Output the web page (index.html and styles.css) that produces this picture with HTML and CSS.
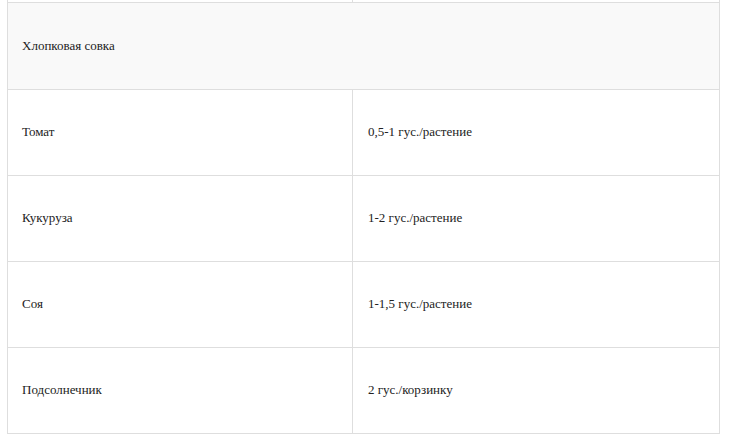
FILE: index.html
```html
<!DOCTYPE html>
<html lang="ru">
<head>
<meta charset="utf-8">
<title>Таблица</title>
<link rel="stylesheet" href="styles.css">
</head>
<body>
<div class="page">
  <table class="norms">
    <colgroup>
      <col class="col-a">
      <col class="col-b">
    </colgroup>
    <tbody>
      <tr class="stub-row"><td></td><td></td></tr>
      <tr class="group-row"><td colspan="2">Хлопковая совка</td></tr>
      <tr><td>Томат</td><td>0,5-1 гус./растение</td></tr>
      <tr><td>Кукуруза</td><td>1-2 гус./растение</td></tr>
      <tr><td>Соя</td><td>1-1,5 гус./растение</td></tr>
      <tr><td>Подсолнечник</td><td>2 гус./корзинку</td></tr>
    </tbody>
  </table>
</div>
</body>
</html>
```
FILE: styles.css
```css
html, body {
  margin: 0;
  padding: 0;
  background: #ffffff;
}
.page {
  padding: 0 0 0 7px;
  width: 712px;
  font-family: "Liberation Serif", "Times New Roman", serif;
  font-size: 13px;
  color: #222222;
}
.norms {
  border-collapse: collapse;
  width: 712px;
  table-layout: fixed;
}
.col-a { width: 345px; }
.col-b { width: 367px; }
.norms td {
  border: 1px solid #dedede;
  height: 86px;
  padding: 0 15px;
  vertical-align: middle;
  box-sizing: border-box;
}
.norms td:first-child {
  padding-left: 14px;
}
.norms .stub-row td {
  height: 2px;
  padding: 0;
  border-top: none;
}
.norms .group-row td {
  background: #f9f9f9;
  height: 87px;
}
```
